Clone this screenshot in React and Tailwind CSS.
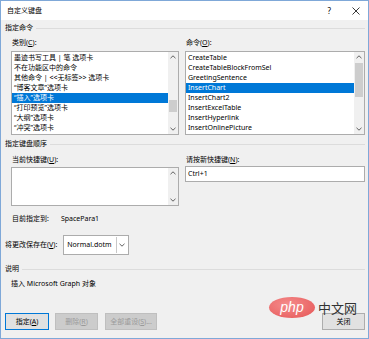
import React from 'react'

const leftItems = [
  '墨迹书写工具 | 笔 选项卡',
  '不在功能区中的命令',
  '其他命令 | <<无标签>> 选项卡',
  '“博客文章”选项卡',
  '“插入”选项卡',
  '“打印预览”选项卡',
  '“大纲”选项卡',
  '“冲突”选项卡',
]

const rightItems = [
  'CreateTable',
  'CreateTableBlockFromSel',
  'GreetingSentence',
  'InsertChart',
  'InsertChart2',
  'InsertExcelTable',
  'InsertHyperlink',
  'InsertOnlinePicture',
]

function Chevron({ down }) {
  return (
    <svg width="6" height="4" viewBox="0 0 6 4" className="block">
      <path
        d={down ? 'M0.5 0.8 L3 3.2 L5.5 0.8' : 'M0.5 3.2 L3 0.8 L5.5 3.2'}
        fill="none"
        stroke="#606060"
        strokeWidth="1"
      />
    </svg>
  )
}

function ScrollBar({ before = 0, thumb = 0 }) {
  return (
    <div className="w-[10px] bg-[#f0f0f0] flex flex-col">
      <div className="h-[10px] flex items-center justify-center shrink-0">
        <Chevron />
      </div>
      <div className="flex-1 flex flex-col">
        <div style={{ height: before }} />
        {thumb > 0 && <div className="bg-[#cdcdcd] mx-[1px]" style={{ height: thumb }} />}
      </div>
      <div className="h-[10px] flex items-center justify-center shrink-0">
        <Chevron down />
      </div>
    </div>
  )
}

function Header({ children }) {
  return (
    <div className="flex items-center h-[14px] gap-[3px]">
      <span>{children}</span>
      <div className="flex-1 h-px bg-[#dcdcdc]" />
    </div>
  )
}

function U({ children }) {
  return <span className="underline underline-offset-1">{children}</span>
}

function ListBox({ items, selected, before, thumb }) {
  return (
    <div className="h-[84px] border border-[#acacac] bg-white flex">
      <div className="flex-1 pt-[1px]">
        {items.map((it, i) => (
          <div
            key={it}
            className={
              'h-[10px] leading-[10px] pl-[2px] whitespace-nowrap ' +
              (i === selected ? 'bg-[#0078d7] text-white' : '')
            }
          >
            {it}
          </div>
        ))}
      </div>
      <ScrollBar before={before} thumb={thumb} />
    </div>
  )
}

function Btn({ children, primary, disabled, w }) {
  return (
    <div
      className={
        'h-[17px] flex items-center justify-center border ' +
        (primary
          ? 'border-[#0078d7] bg-[#e1e1e1] text-black'
          : disabled
          ? 'border-[#bfbfbf] bg-[#cccccc] text-[#9a9a9a]'
          : 'border-[#adadad] bg-[#e1e1e1] text-black')
      }
      style={{ width: w }}
    >
      {children}
    </div>
  )
}

export default function App() {
  return (
    <div className="w-[369px] h-[339px] relative overflow-hidden bg-[#f0f0f0] border border-[#7fa8d8] text-[7px] leading-[10px] text-black font-['Noto_Sans','Noto_Sans_CJK_SC',sans-serif] flex flex-col">
      {/* title bar */}
      <div className="h-[19px] bg-white flex items-center pl-[6px] pr-[8px] shrink-0">
        <span>自定义键盘</span>
        <span className="ml-auto text-[8px] mr-[21px]">?</span>
        <svg width="8" height="8" viewBox="0 0 8 8">
          <path d="M0.5 0.5 L7.5 7.5 M7.5 0.5 L0.5 7.5" stroke="#222" strokeWidth="0.9" />
        </svg>
      </div>

      <div className="flex-1 flex flex-col pl-[4px] pr-[3px]">
        <div className="mt-[1px]">
          <Header>指定命令</Header>
        </div>

        <div className="flex gap-[6px] pl-[6px]">
          <div className="w-[168px] flex flex-col">
            <div className="h-[14px] mt-[1px] flex items-center pl-[1px]">
              <span>类别(<U>C</U>):</span>
            </div>
            <div className="mt-[1px]">
              <ListBox items={leftItems} selected={4} before={38} thumb={12} />
            </div>
          </div>
          <div className="flex-1 flex flex-col">
            <div className="h-[14px] mt-[1px] flex items-center pl-[1px]">
              <span>命令(<U>O</U>):</span>
            </div>
            <div className="mt-[1px]">
              <ListBox items={rightItems} selected={3} before={1} thumb={34} />
            </div>
          </div>
        </div>

        <div className="mt-[2px]">
          <Header>指定键盘顺序</Header>
        </div>

        <div className="flex gap-[6px] pl-[6px]">
          <div className="w-[168px] flex flex-col">
            <div className="h-[14px] mt-[2px] flex items-center pl-[1px]">
              <span>当前快捷键(<U>U</U>):</span>
            </div>
            <div className="h-[39px] border border-[#acacac] bg-white flex">
              <div className="flex-1" />
              <ScrollBar />
            </div>
          </div>
          <div className="flex-1 flex flex-col">
            <div className="h-[14px] mt-[2px] flex items-center pl-[1px]">
              <span>请按新快捷键(<U>N</U>):</span>
            </div>
            <div className="h-[16px] -mt-[1px] border border-[#acacac] bg-white flex items-center pl-[2px]">
              Ctrl+1
            </div>
          </div>
        </div>

        <div className="h-[14px] mt-[6px] flex items-center pl-[7px]">
          <span>目前指定到:</span>
          <span className="ml-[12px]">SpacePara1</span>
        </div>

        <div className="h-[20px] mt-[9px] flex items-center">
          <span>将更改保存在(<U>V</U>):</span>
          <div className="ml-[6px] w-[66px] h-[20px] border border-[#acacac] bg-white flex">
            <div className="flex-1 flex items-center pl-[3px]">Normal.dotm</div>
            <div className="w-[11px] my-[1px] mr-[1px] border-l border-[#c8c8c8] flex items-center justify-center">
              <Chevron down />
            </div>
          </div>
        </div>

        <div className="mt-[7px]">
          <Header>说明</Header>
        </div>

        <div className="h-[14px] mt-[1px] flex items-center pl-[6px]">
          插入 Microsoft Graph 对象
        </div>

        <div className="mt-[22px] flex items-center">
          <Btn primary w={44}>
            <span>指定(<U>A</U>)</span>
          </Btn>
          <div className="ml-[6px]">
            <Btn disabled w={43}>
              <span>删除(<U>R</U>)</span>
            </Btn>
          </div>
          <div className="ml-[7px]">
            <Btn disabled w={52}>
              <span>全部重设(<U>S</U>)...</span>
            </Btn>
          </div>
          <div className="ml-auto">
            <Btn w={43}>关闭</Btn>
          </div>
        </div>
      </div>

      {/* watermark */}
      <div className="absolute left-[268px] top-[296px] flex items-center gap-[3px] pointer-events-none">
        <div className="w-[46px] h-[21px] rounded-[50%] bg-[radial-gradient(ellipse_at_40%_35%,#f58c8c,#e55555)] flex items-center justify-center">
          <span className="text-white italic text-[14px] leading-[14px] font-['Liberation_Sans',sans-serif] -mt-[2px]">php</span>
        </div>
        <span className="text-[13px] leading-[14px] text-[#333] font-['Noto_Sans_CJK_SC',sans-serif]">中文网</span>
      </div>
    </div>
  )
}
